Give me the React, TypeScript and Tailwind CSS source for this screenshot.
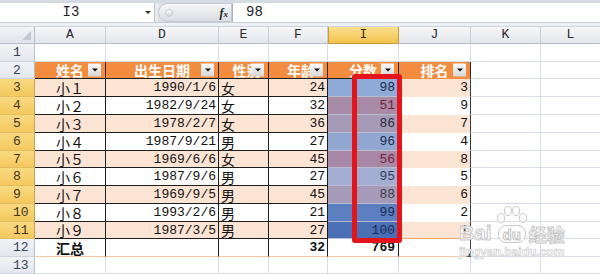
import React from "react";

const MONO = "font-['Liberation_Mono',monospace]";
const CJK = "font-['Noto_Sans_CJK_SC',sans-serif]";

const colW = [
  "w-[71px]",
  "w-[113px]",
  "w-[50px]",
  "w-[59px]",
  "w-[71px]",
  "w-[72px]",
  "w-[70px]",
  "w-[60px]",
];
const colLetters = ["A", "D", "E", "F", "I", "J", "K", "L"];

const rowH = [
  "h-[18px]",
  "h-[17px]",
  "h-[18px]",
  "h-[18px]",
  "h-[18px]",
  "h-[18px]",
  "h-[17px]",
  "h-[18px]",
  "h-[18px]",
  "h-[18px]",
  "h-[17px]",
  "h-[18px]",
  "h-[17px]",
];

type D = {
  name: string;
  date: string;
  sex: string;
  age: string;
  score: string;
  rank: string;
  fill: string;
  txt: string;
};

const data: D[] = [
  { name: "小１", date: "1990/1/6", sex: "女", age: "24", score: "98", rank: "3", fill: "bg-[#8eaad6]", txt: "text-[#1c2b4e]" },
  { name: "小２", date: "1982/9/24", sex: "女", age: "32", score: "51", rank: "9", fill: "bg-[#a68aa6]", txt: "text-[#7a1f3a]" },
  { name: "小３", date: "1978/2/7", sex: "女", age: "36", score: "86", rank: "7", fill: "bg-[#a59bb7]", txt: "text-[#2a2a3a]" },
  { name: "小４", date: "1987/9/21", sex: "男", age: "27", score: "96", rank: "4", fill: "bg-[#92a8d2]", txt: "text-[#1c2b4e]" },
  { name: "小５", date: "1969/6/6", sex: "女", age: "45", score: "56", rank: "8", fill: "bg-[#a789a7]", txt: "text-[#7a1f3a]" },
  { name: "小６", date: "1987/9/6", sex: "男", age: "27", score: "95", rank: "5", fill: "bg-[#a3aed2]", txt: "text-[#36405e]" },
  { name: "小７", date: "1969/9/5", sex: "男", age: "45", score: "88", rank: "6", fill: "bg-[#a59bb8]", txt: "text-[#3a3a4a]" },
  { name: "小８", date: "1993/2/6", sex: "男", age: "21", score: "99", rank: "2", fill: "bg-[#5b7fc0]", txt: "text-[#1c2b55]" },
  { name: "小９", date: "1987/3/5", sex: "男", age: "27", score: "100", rank: "1", fill: "bg-[#4b6fb5]", txt: "text-[#1c2b55]" },
];

const GRID = "border-r border-b border-[#d8dde6]";

function Dropdown() {
  return (
    <div className="absolute right-[4px] top-1/2 -translate-y-1/2 w-[13px] h-[13px] bg-gradient-to-b from-[#fbfbfb] to-[#d6d6d6] flex items-center justify-center">
      <div className="w-0 h-0 border-l-[3px] border-r-[3px] border-t-[3px] border-l-transparent border-r-transparent border-t-[#111]" />
    </div>
  );
}

function RowHead({ n, sel, h }: { n: number; sel: boolean; h: string }) {
  return (
    <div
      className={`w-[35px] shrink-0 ${h} ${MONO} text-[13px] leading-none flex items-center pl-[13px] border-r border-b ${
        sel
          ? "bg-gradient-to-b from-[#f9da80] to-[#f4c85e] border-r-[#c9a24d] border-b-[#e2bd62] text-[#3c3526]"
          : "bg-gradient-to-b from-[#f1f3f6] to-[#e3e7ed] border-r-[#b5bfcc] border-b-[#cfd5de] text-[#3a4555]"
      }`}
    >
      {n}
    </div>
  );
}

export default function App() {
  return (
    <div className={`relative w-[600px] h-[274px] overflow-hidden bg-white ${CJK}`}>
      {/* Formula bar */}
      <div className="h-[27px] flex flex-col bg-[#dfe4ea]">
        <div className="h-[3px] bg-[#d5dbe2]" />
        <div className="h-[19px] flex">
          <div className="w-[155px] bg-white flex items-center relative border-r border-[#b8c0cb]">
            <span className={`${MONO} text-[14px] text-[#222] w-[142px] text-center`}>I3</span>
            <div className="absolute left-[145px] top-[8px] w-0 h-0 border-l-[3px] border-r-[3px] border-t-[3px] border-l-transparent border-r-transparent border-t-[#333]" />
          </div>
          <div className="w-[3px] bg-[#e8ebef]" />
          <div className="w-[74px] rounded-l-full bg-gradient-to-b from-[#f6f7f9] to-[#d9dde3] border border-[#c2c9d2] flex items-center justify-between pl-[6px] pr-[3px]">
            <div className="w-[8px] h-[8px] rounded-full bg-gradient-to-b from-[#ffffff] to-[#cfd5dc] border border-[#c4cad2]" />
            <span className="font-['Liberation_Serif',serif] italic font-bold text-[12px] text-[#222] leading-none">
              f<span className="text-[9px]">x</span>
            </span>
          </div>
          <div className="flex-1 bg-white border-l border-[#aab3bf] flex items-center pl-[13px]">
            <span className={`${MONO} text-[14px] text-[#222]`}>98</span>
          </div>
        </div>
        <div className="h-[5px] flex flex-col">
          <div className="h-[1px] bg-[#c8ced6]" />
          <div className="flex-1 bg-[#edf0f4]" />
          <div className="h-[1px] bg-[#d0d6de]" />
        </div>
      </div>

      {/* Column headers */}
      <div className="flex h-[17px]">
        <div className="w-[35px] shrink-0 bg-gradient-to-b from-[#f1f3f6] to-[#e1e5eb] border-r border-b border-[#b5bfcc] relative">
          <div className="absolute right-[3px] bottom-[3px] w-0 h-0 border-l-[9px] border-t-[9px] border-l-transparent border-t-transparent border-b-0 border-r-0" />
          <svg className="absolute right-[3px] bottom-[3px]" width="9" height="9" viewBox="0 0 9 9">
            <polygon points="9,0 9,9 0,9" fill="#c3cad3" />
          </svg>
        </div>
        {colLetters.map((c, i) => (
          <div
            key={c}
            className={`${colW[i]} shrink-0 ${MONO} text-[13px] flex items-center justify-center border-r border-b ${
              c === "I"
                ? "bg-gradient-to-b from-[#fbe18c] to-[#f3c14c] border-[#c99a3d] border-l text-[#3a2f14]"
                : "bg-gradient-to-b from-[#f6f7f9] to-[#e2e6ec] border-r-[#c9cfd8] border-b-[#b3bdca] text-[#2a2a2a]"
            }`}
          >
            {c}
          </div>
        ))}
      </div>

      {/* Row 1 */}
      <div className="flex">
        <RowHead n={1} sel={false} h={rowH[0]} />
        {colW.map((w, i) => (
          <div key={i} className={`${w} shrink-0 ${rowH[0]} ${GRID}`} />
        ))}
      </div>

      {/* Row 2: table header */}
      <div className="flex">
        <RowHead n={2} sel={false} h={rowH[1]} />
        {["姓名", "出生日期", "性别", "年龄", "分数", "排名"].map((t, i) => (
          <div
            key={t}
            className={`${colW[i]} shrink-0 ${rowH[1]} relative bg-[#f38c3e] border-r border-b ${
              i === 5 ? "border-r-[#2a2a2a] border-b-[#f38c3e]" : "border-r-[#2a2a2a] border-b-[#1e1e1e]"
            } text-white font-bold text-[14px] leading-none flex items-center justify-center overflow-hidden`}
          >
            <span className={i === 2 || i === 3 ? "pl-[6px]" : ""}>{t}</span>
            <Dropdown />
          </div>
        ))}
        <div className={`${colW[6]} shrink-0 ${rowH[1]} ${GRID}`} />
        <div className={`${colW[7]} shrink-0 ${rowH[1]} ${GRID}`} />
      </div>

      {/* Data rows 3-11 */}
      {data.map((d, r) => {
        const h = rowH[r + 2];
        const peach = r % 2 === 0;
        const bg = peach ? "bg-[#fce4d4]" : "bg-white";
        const last = r === data.length - 1;
        const dark = "border-r border-b border-r-[#1e1e1e] border-b-[#1e1e1e]";
        return (
          <div key={r} className="flex">
            <RowHead n={r + 3} sel={true} h={h} />
            <div className={`${colW[0]} shrink-0 ${h} ${bg} ${dark} text-[14px] text-[#111] leading-none flex items-center justify-center`}>
              {d.name}
            </div>
            <div className={`${colW[1]} shrink-0 ${h} ${bg} ${dark} ${MONO} text-[13px] text-[#111] leading-none flex items-center justify-end pr-[2px]`}>
              {d.date}
            </div>
            <div className={`${colW[2]} shrink-0 ${h} ${bg} ${dark} text-[14px] text-[#111] leading-none flex items-center pl-[2px]`}>
              {d.sex}
            </div>
            <div className={`${colW[3]} shrink-0 ${h} ${bg} ${dark} ${MONO} text-[13px] text-[#111] leading-none flex items-center justify-end pr-[2px]`}>
              {d.age}
            </div>
            <div className={`${colW[4]} shrink-0 ${h} ${d.fill} ${d.txt} border-r border-b border-r-[#2a2a2a] border-b-[#b9bccd] ${MONO} text-[13px] leading-none flex items-center justify-end pr-[3px]`}>
              {d.score}
            </div>
            <div className={`${colW[5]} shrink-0 ${h} ${bg} border-r border-b border-r-[#3a3a3a] ${last ? "border-b-[#f0a46a]" : "border-b-transparent"} ${MONO} text-[13px] text-[#111] leading-none flex items-center justify-end pr-[2px]`}>
              {d.rank}
            </div>
            <div className={`${colW[6]} shrink-0 ${h} ${GRID}`} />
            <div className={`${colW[7]} shrink-0 ${h} ${GRID}`} />
          </div>
        );
      })}

      {/* Row 12: totals */}
      <div className="flex">
        <RowHead n={12} sel={false} h={rowH[11]} />
        <div className={`${colW[0]} shrink-0 ${rowH[11]} border-r border-b border-r-[#1e1e1e] border-b-[#f6c9a6] text-[14px] font-bold text-[#111] leading-none flex items-center justify-center`}>
          汇总
        </div>
        <div className={`${colW[1]} shrink-0 ${rowH[11]} border-r border-b border-r-[#1e1e1e] border-b-[#f6c9a6]`} />
        <div className={`${colW[2]} shrink-0 ${rowH[11]} border-r border-b border-r-[#1e1e1e] border-b-[#f6c9a6]`} />
        <div className={`${colW[3]} shrink-0 ${rowH[11]} border-r border-b border-r-[#1e1e1e] border-b-[#f6c9a6] ${MONO} font-bold text-[13px] text-[#111] leading-none flex items-center justify-end pr-[2px]`}>
          32
        </div>
        <div className={`${colW[4]} shrink-0 ${rowH[11]} border-r border-b border-r-[#1e1e1e] border-b-[#f6c9a6] ${MONO} font-bold text-[13px] text-[#111] leading-none flex items-center justify-end pr-[3px]`}>
          769
        </div>
        <div className={`${colW[5]} shrink-0 ${rowH[11]} border-r border-b border-r-[#3a3a3a] border-b-[#f6c9a6] relative`}>
          <svg className="absolute right-[-1px] bottom-[-1px]" width="5" height="5" viewBox="0 0 5 5">
            <polygon points="5,0 5,5 0,5" fill="#444" />
          </svg>
        </div>
        <div className={`${colW[6]} shrink-0 ${rowH[11]} ${GRID}`} />
        <div className={`${colW[7]} shrink-0 ${rowH[11]} ${GRID}`} />
      </div>

      {/* Row 13 */}
      <div className="flex">
        <RowHead n={13} sel={false} h={rowH[12]} />
        {colW.map((w, i) => (
          <div key={i} className={`${w} shrink-0 ${rowH[12]} ${GRID}`} />
        ))}
      </div>

      {/* Red highlight box */}
      <div className="absolute left-[352px] top-[74px] w-[50px] h-[169px] border-[5px] border-[#e3141c] rounded-[3px]" />

      {/* Watermark */}
      <div className="absolute left-[459px] top-[206px] pointer-events-none flex flex-col items-start">
        <div className="flex items-end">
          <span className="font-['Liberation_Sans',sans-serif] font-bold text-[21px] leading-none text-white/80 [-webkit-text-stroke:1px_#c8c8c8]">
            Bai
          </span>
          <div className="relative w-[32px] h-[37px] ml-[4px]">
            <svg className="absolute left-0 top-0" width="32" height="20" viewBox="0 0 32 20">
              <ellipse cx="5" cy="12" rx="3.5" ry="4.5" fill="#ffffffcc" stroke="#c8c8c8" />
              <ellipse cx="12" cy="5" rx="3.5" ry="4.5" fill="#ffffffcc" stroke="#c8c8c8" />
              <ellipse cx="20" cy="5" rx="3.5" ry="4.5" fill="#ffffffcc" stroke="#c8c8c8" />
              <ellipse cx="27" cy="12" rx="3.5" ry="4.5" fill="#ffffffcc" stroke="#c8c8c8" />
            </svg>
            <div className="absolute left-[2px] bottom-0 w-[28px] h-[18px] rounded-[8px] border border-[#c8c8c8] bg-white/70 flex items-center justify-center">
              <span className="font-['Liberation_Sans',sans-serif] font-bold text-[15px] leading-none text-white [-webkit-text-stroke:1px_#c4c4c4]">
                du
              </span>
            </div>
          </div>
          <span className="ml-[1px] text-[18px] font-bold leading-none text-white/80 [-webkit-text-stroke:1px_#c8c8c8]">
            经验
          </span>
        </div>
        <span className="mt-[3px] font-['Liberation_Sans',sans-serif] font-bold text-[12px] leading-none text-white/80 [-webkit-text-stroke:0.6px_#cacaca]">
          jingyan.baidu.com
        </span>
      </div>
    </div>
  );
}
